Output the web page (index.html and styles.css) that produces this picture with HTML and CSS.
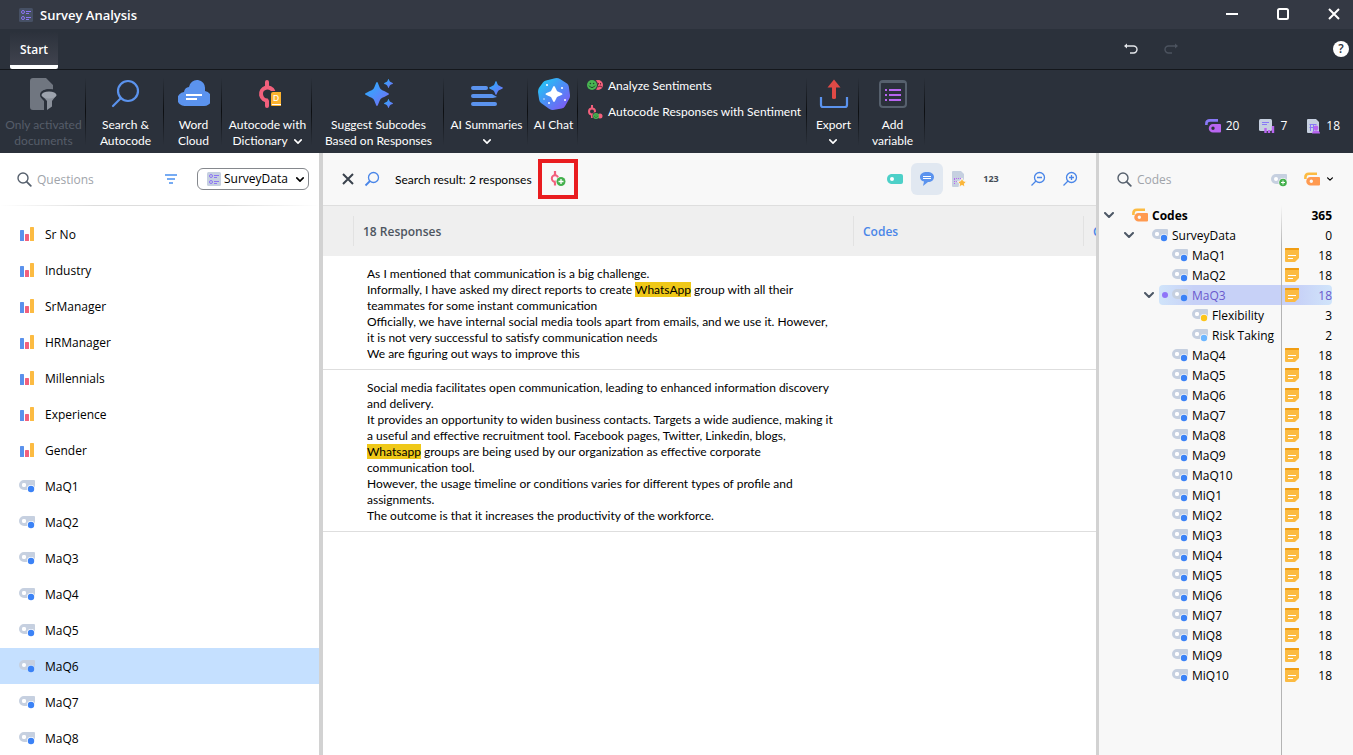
FILE: index.html
```html
<!DOCTYPE html>
<html lang="en">
<head>
<meta charset="utf-8">
<title>Survey Analysis</title>
<link rel="stylesheet" href="styles.css">
</head>
<body>
<svg class="sprite" aria-hidden="true">
  <defs>
    <linearGradient id="spark" x1="0" y1="0" x2="1" y2="1"><stop offset="0" stop-color="#22b4ff"/><stop offset="1" stop-color="#7a6af5"/></linearGradient>
    <linearGradient id="chat" x1="0" y1="0" x2="1" y2="1"><stop offset="0" stop-color="#19d3f5"/><stop offset=".5" stop-color="#4c8df6"/><stop offset="1" stop-color="#8a4df5"/></linearGradient>
    <mask id="tagmask"><path fill="#fff" d="M0 0h16v16H0z"/><circle cx="12" cy="11" r="4"/></mask>
    <symbol id="bars" viewBox="0 0 14 14"><rect x="0" y="3" width="4" height="11" rx=".6" fill="#5a91ec"/><rect x="5" y="7" width="4" height="7" rx=".6" fill="#f2607c"/><rect x="10" y="0" width="4" height="14" rx=".6" fill="#fcbb42"/></symbol>
    <symbol id="tag" viewBox="0 0 16 16"><path mask="url(#tagmask)" fill="#c6d0e0" fill-rule="evenodd" d="M5 2h10a1 1 0 0 1 1 1v8a1 1 0 0 1-1 1H5A5 5 0 0 1 5 2zm0 3a2 2 0 1 0 0 4 2 2 0 0 0 0-4z"/><circle cx="5" cy="7" r="2" fill="#fff"/><circle cx="12" cy="11" r="3.2" fill="currentColor"/></symbol>
    <symbol id="tags" viewBox="0 0 16 14"><path fill="none" stroke="#fcbb42" stroke-width="2.6" d="M1.400 7V5.200C1.400 3 3 1.700 5 1.700h8"/><path fill="#ff9a50" fill-rule="evenodd" d="M6.500 5H15a1 1 0 0 1 1 1v6.500a1 1 0 0 1-1 1H6.500a4.200 4.200 0 0 1 0-8.500zm.8 2.600a1.700 1.700 0 1 0 0 3.400 1.700 1.700 0 0 0 0-3.400z"/></symbol>
    <symbol id="memo" viewBox="0 0 14 14"><path fill="#fcbb42" d="M0 0h14v10l-4 4H1a1 1 0 0 1-1-1z"/><path fill="#f09d13" d="M0 1a1 1 0 0 1 1-1h12a1 1 0 0 1 1 1v1H0z"/><path stroke="#fff" d="M3 7.500h8M3 10.500h5"/></symbol>
    <symbol id="down" viewBox="0 0 10 6"><path fill="none" stroke="currentColor" stroke-width="2" stroke-linecap="round" stroke-linejoin="round" d="M1 1l4 4 4-4"/></symbol>
    <symbol id="find" viewBox="0 0 15 15"><circle cx="6" cy="6" r="5" fill="none" stroke="currentColor" stroke-width="1.400"/><path stroke="currentColor" stroke-width="1.800" stroke-linecap="round" d="M9.800 9.800l4 4"/></symbol>
    <symbol id="survey" viewBox="0 0 14 14"><rect width="14" height="14" rx="1.500" fill="var(--plate)"/><g fill="none" stroke="#8d75f5"><circle cx="4" cy="4" r="1.500"/><circle cx="4" cy="10" r="1.500"/><path d="M7 3.500h5M7 5.500h3M7 9.500h5M7 11.500h3"/></g></symbol>
    <symbol id="star4" viewBox="0 0 20 20"><path fill="url(#spark)" d="M10 0c1 0 1.600 4 3 5.800 1.800 1.600 7 3.200 7 4.200s-5.200 2.600-7 4.200C11.600 16 11 20 10 20s-1.600-4-3-5.800C5.200 12.600 0 11 0 10s5.200-2.600 7-4.200C8.400 4 9 0 10 0z"/></symbol>
    <symbol id="smile" viewBox="0 0 10 10"><circle cx="5" cy="5" r="5" fill="#49b552"/><circle cx="3.400" cy="3.500" r=".8" fill="#20462b"/><circle cx="6.600" cy="3.500" r=".8" fill="#20462b"/><path d="M2 5.600q3 4 6 0" fill="none" stroke="#20462b"/></symbol>
  </defs>
</svg>

<div class="app">
  <header class="titlebar">
    <svg class="i14 dark-plate"><use href="#survey"/></svg>
    <h1>Survey Analysis</h1>
    <div class="window-buttons">
      <button type="button" aria-label="Minimize"><svg width="14" height="14"><path d="M1 6h12" stroke="#fff" stroke-width="2"/></svg></button>
      <button type="button" aria-label="Maximize"><svg width="14" height="14"><rect x="2" y="1" width="10" height="10" rx="1.500" fill="none" stroke="#fff" stroke-width="2"/></svg></button>
      <button type="button" aria-label="Close"><svg width="14" height="14"><path d="M2 1l10 10M12 1L2 11" stroke="#fff" stroke-width="2"/></svg></button>
    </div>
  </header>

  <nav class="tabs">
    <button type="button" class="tab">Start</button>
    <div class="tab-actions">
      <button type="button" aria-label="Undo"><svg width="16" height="14" fill="none" stroke="#e4e6ea" stroke-width="1.400"><path d="M2 4h8.500a3.500 3.500 0 0 1 0 7H7"/><path d="M4 1.500L1 4l3 2.500z" fill="#e4e6ea" stroke="none"/></svg></button>
      <button type="button" aria-label="Redo" disabled><svg width="16" height="14" fill="none" stroke="#4c535f" stroke-width="1.400"><path d="M14 4H5.500a3.500 3.500 0 0 0 0 7H9"/><path d="M12 1.500L15 4l-3 2.500z" fill="#4c535f" stroke="none"/></svg></button>
      <button type="button" class="help" aria-label="Help">?</button>
    </div>
  </nav>

  <section class="ribbon" aria-label="Start">
    <div class="group g-docs"><button type="button" disabled>
      <svg width="32" height="32"><path fill="#707680" d="M5 0h13l7 7v4.500c-7-1-12 1-12 5 0 2 2 3 4 5V32H5a3 3 0 0 1-3-3V3a3 3 0 0 1 3-3z"/><path fill="#2b313b" d="M27 12c-8-2-15 0-15 5 0 2 1.500 3.500 4 6v9h3V22l-5-5z"/><path fill="#8a909a" d="M13.500 17l5.500 6v9l5-3.500V23l4.500-6z"/><ellipse cx="21" cy="17" rx="7.500" ry="3.500" fill="#9da3ad"/></svg>
      <span>Only activated<br>documents</span></button></div>
    <div class="group g-search"><button type="button">
      <svg width="32" height="32" fill="none" stroke="#5b93ee" stroke-width="2.200" stroke-linecap="round"><circle cx="18" cy="13" r="10"/><path d="M11 20l-8 8"/></svg>
      <span>Search &amp;<br>Autocode</span></button></div>
    <div class="group g-cloud"><button type="button">
      <svg width="32" height="32"><path fill="#5b93ee" d="M7 28a7 7 0 0 1-1-14 6 6 0 0 1 5-5 8 8 0 0 1 16 2v2a7.500 7.500 0 0 1-2 15z"/><path stroke="#fff" stroke-width="1.800" d="M8 17h16M8 21h11"/></svg>
      <span>Word<br>Cloud</span></button></div>
    <div class="group g-dict"><button type="button">
      <svg width="32" height="32"><path stroke="#f2607c" stroke-width="4" stroke-linecap="round" d="M15 4v5M15 23v5"/><path fill="none" stroke="#f2607c" stroke-width="4" d="M21.500 13.500A6.500 6.500 0 1 0 16 22.500"/><path fill="#2b313b" d="M18 13h12v16H18z"/><path fill="#fcb22f" d="M21 14h8v14h-9q-1 0-1-1V16q0-2 2-2z"/><path stroke="#fff" d="M20 26.500h9"/><text x="21" y="23" fill="#fff" font-size="8" font-weight="600">D</text></svg>
      <span>Autocode with<br>Dictionary <svg class="caret"><use href="#down"/></svg></span></button></div>
    <div class="group g-suggest"><button type="button">
      <svg width="32" height="32"><use href="#star4" x="2" y="4" width="24" height="24"/><use href="#star4" x="21" y="1" width="9" height="9"/><use href="#star4" x="21" y="21" width="9" height="9"/></svg>
      <span>Suggest Subcodes<br>Based on Responses</span></button></div>
    <div class="group g-sum"><button type="button">
      <svg width="32" height="32"><path stroke="#5b93ee" stroke-width="4" stroke-linecap="round" d="M2 10h13M2 18h17M2 26h22"/><path fill="#5b93ee" d="M16 16h5l5 3-4 1h-6z"/><use href="#star4" x="18" y="3" width="14" height="14"/></svg>
      <span>AI Summaries<br><svg class="caret"><use href="#down"/></svg></span></button></div>
    <div class="group g-chat"><button type="button">
      <svg width="32" height="32"><path fill="url(#chat)" d="M8 2.500L17 .2q3-.5 5 .7l7 4.600q1.500 1.200 1.800 3L32 17q.2 2-.9 4l-4 7q-1 2-3.400 2.500L15 32q-2 .2-4-1.200L3 25q-1.600-1.400-1.900-3.500L0 14q0-2 .9-4l4-5.500q1-1.500 3.100-2z"/><path fill="#fff" d="M16 8c1 0 2 3.500 3 5 1.500 1 5.500 2 5.500 3s-4 2-5.500 3c-1 1.500-2 5-3 5s-2-3.500-3-5c-1.500-1-5.500-2-5.500-3s4-2 5.500-3c1-1.500 2-5 3-5z"/><g fill="#fff"><circle cx="9" cy="7" r="1"/><circle cx="24" cy="10" r="1"/><circle cx="27" cy="22" r="1"/><circle cx="11" cy="25" r="1"/><circle cx="6" cy="21" r=".7"/></g></svg>
      <span>AI Chat</span></button></div>
    <div class="group g-senti">
      <button type="button" class="line"><svg width="16" height="16"><circle cx="11" cy="7" r="5" fill="#f2607c"/><path d="M11 9q2-2 4 0M11.500 5v1.500M13.500 5v1.500" fill="none" stroke="#6a2637"/><circle cx="5.500" cy="7" r="5.500" fill="#2b313b"/><use href="#smile" x="0" y="2" width="10" height="10"/></svg><span>Analyze Sentiments</span></button>
      <button type="button" class="line"><svg width="16" height="16"><path fill="none" stroke="#f2607c" stroke-width="2" d="M5 1v3M5 11v3"/><circle cx="5" cy="7.500" r="3" fill="none" stroke="#f2607c" stroke-width="2"/><circle cx="9.500" cy="12" r="4" fill="#2b313b"/><circle cx="13" cy="12" r="2.500" fill="#f2607c"/><use href="#smile" x="6" y="9" width="6" height="6"/></svg><span>Autocode Responses with Sentiment</span></button>
    </div>
    <div class="group g-export"><button type="button">
      <svg width="32" height="32"><path fill="none" stroke="#5b93ee" stroke-width="2.200" d="M3 19v8q0 2 2 2h22q2 0 2-2v-8"/><path fill="#e04a46" d="M16 1.500l6.500 8H18V20q0 1-2 1t-2-1V9.500H9.500z"/></svg>
      <span>Export<br><svg class="caret"><use href="#down"/></svg></span></button></div>
    <div class="group g-var"><button type="button">
      <svg width="32" height="32"><rect x="3" y="3" width="26" height="26" rx="3" fill="none" stroke="#56606d" stroke-width="2"/><path stroke="#56606d" stroke-width="2" d="M3 4h26"/><path stroke="#b865f0" stroke-width="2" d="M8 12h2M8 17h2M8 22h2M12 12h12M12 17h12M12 22h12"/></svg>
      <span>Add<br>variable</span></button></div>
    <div class="stats">
      <span><svg width="16" height="16"><path fill="none" stroke="#8878f6" stroke-width="2.600" d="M1.400 7V5.600c0-2 1.600-3.200 3.600-3.200h8"/><path fill="#b865f0" fill-rule="evenodd" d="M8 6h7q1 0 1 1v6.500q0 1-1 1H8A4.200 4.200 0 0 1 8 6zm0 2.600a1.700 1.700 0 1 0 0 3.400 1.700 1.700 0 0 0 0-3.400z"/></svg>20</span>
      <span><svg width="16" height="16"><rect x="0" y="1" width="13" height="12" rx="1.500" fill="#c6d0e0"/><path stroke="#8878f6" d="M3 4.500h7M3 6.500h5"/><path stroke="#b865f0" stroke-width="2.400" d="M6.500 10v5M10 12v3M14 8v7"/></svg>7</span>
      <span><svg width="14" height="16"><path fill="#c6d0e0" d="M1 1h8l3 3v11H1q-1 0-1-1V2q0-1 1-1z"/><path fill="none" stroke="#8878f6" d="M2.500 6.500h7M2.500 9.500h5M3.500 6v7M6.500 6v7"/><circle cx="9" cy="10" r="2.400" fill="#b865f0"/><path fill="#b865f0" d="M5 15.500q0-3 4-3t4 3z"/></svg>18</span>
    </div>
  </section>

  <main class="panes">
    <aside class="questions">
      <div class="pane-head">
        <label class="search"><svg class="i15"><use href="#find"/></svg><input type="text" placeholder="Questions" aria-label="Questions"></label>
        <button type="button" aria-label="Filter"><svg width="14" height="10" stroke="#4a90f0" stroke-width="1.400"><path d="M1 1h12M3 5h8M5 9h4"/></svg></button>
        <div class="picker">
          <svg class="i14 picker-icon"><use href="#survey"/></svg>
          <select aria-label="Survey"><option>SurveyData</option></select>
          <svg class="picker-caret"><use href="#down"/></svg>
        </div>
      </div>
      <ul class="question-list">
        <li><svg class="i14"><use href="#bars"/></svg><span>Sr No</span></li>
        <li><svg class="i14"><use href="#bars"/></svg><span>Industry</span></li>
        <li><svg class="i14"><use href="#bars"/></svg><span>SrManager</span></li>
        <li><svg class="i14"><use href="#bars"/></svg><span>HRManager</span></li>
        <li><svg class="i14"><use href="#bars"/></svg><span>Millennials</span></li>
        <li><svg class="i14"><use href="#bars"/></svg><span>Experience</span></li>
        <li><svg class="i14"><use href="#bars"/></svg><span>Gender</span></li>
        <li><svg class="i16 blue"><use href="#tag"/></svg><span>MaQ1</span></li>
        <li><svg class="i16 blue"><use href="#tag"/></svg><span>MaQ2</span></li>
        <li><svg class="i16 blue"><use href="#tag"/></svg><span>MaQ3</span></li>
        <li><svg class="i16 blue"><use href="#tag"/></svg><span>MaQ4</span></li>
        <li><svg class="i16 blue"><use href="#tag"/></svg><span>MaQ5</span></li>
        <li class="selected"><svg class="i16 blue"><use href="#tag"/></svg><span>MaQ6</span></li>
        <li><svg class="i16 blue"><use href="#tag"/></svg><span>MaQ7</span></li>
        <li><svg class="i16 blue"><use href="#tag"/></svg><span>MaQ8</span></li>
      </ul>
    </aside>

    <section class="responses">
      <div class="toolbar">
        <button type="button" class="clear" aria-label="Close search"><svg width="14" height="14"><path d="M2 2l10 10M12 2L2 12" stroke="#3a424d" stroke-width="2"/></svg></button>
        <svg class="result-icon" width="16" height="16" fill="none" stroke="#4a86e8" stroke-width="1.300"><circle cx="9.500" cy="6.500" r="5"/><path d="M6 10l-4.500 4.500" stroke-width="1.800"/></svg>
        <span class="result">Search result: 2 responses</span>
        <button type="button" class="autocode" aria-label="Autocode search results"><svg width="16" height="16"><path fill="none" stroke="#f2607c" stroke-width="2.200" d="M5 0v4M5 11v3.500"/><circle cx="5" cy="7.500" r="3.200" fill="none" stroke="#f2607c" stroke-width="2"/><circle cx="11" cy="10.500" r="5.300" fill="#f8f8f8"/><circle cx="11" cy="10.500" r="4.500" fill="#43b04c"/><path stroke="#fff" stroke-width="1.300" d="M8.500 10.500h5M11 8v5"/></svg></button>
        <div class="tools">
          <button type="button" aria-label="Codes"><svg width="16" height="16"><path fill="#4dd0c8" d="M4 3h10q2 0 2 2v6q0 2-2 2H4q-4-1-4-5t4-5z"/><circle cx="5" cy="8" r="2" fill="#fff"/></svg></button>
          <button type="button" class="on" aria-label="Comments"><svg width="16" height="16"><path fill="#5b93ee" d="M8 1c4.500 0 7 2 7 5s-2.500 5-6 5l-5 4 1-4.500C2.500 10 1 8.500 1 6c0-3 2.500-5 7-5z"/><path stroke="#fff" d="M4 5.500h8M4 7.500h8"/></svg></button>
          <button type="button" aria-label="Weighted documents"><svg width="16" height="16"><path fill="#c6d0e0" d="M2 0h8l3 3v6l-4 7H2q-1 0-1-1V1q0-1 1-1z"/><path stroke="#b865f0" stroke-dasharray="1 1" d="M3 7.500h7M3 10.500h4M3.500 8v6"/><path fill="#fbb63b" stroke="#f8f8f8" d="M11 7l1.500 3 3.200.5-2.300 2.300.6 3.200-3-1.500-3 1.500.6-3.200-2.300-2.300 3.200-.5z"/></svg></button>
          <button type="button" class="num">123</button>
          <button type="button" class="spaced" aria-label="Zoom out"><svg width="16" height="16" fill="none" stroke="#4a86e8" stroke-width="1.300"><circle cx="9.500" cy="6.500" r="5"/><path d="M7 6.500h5M6 10l-4.500 4.500"/></svg></button>
          <button type="button" aria-label="Zoom in"><svg width="16" height="16" fill="none" stroke="#4a86e8" stroke-width="1.300"><circle cx="9.500" cy="6.500" r="5"/><path d="M7 6.500h5M9.500 4v5M6 10l-4.500 4.500"/></svg></button>
        </div>
      </div>
      <div class="table-wrap">
        <table>
          <colgroup><col class="c-mark"><col class="c-text"><col class="c-codes"><col class="c-more"></colgroup>
          <thead><tr><th></th><th>18 Responses</th><th class="link">Codes</th><th class="link">Comments</th></tr></thead>
          <tbody>
            <tr><td></td><td><p>As I mentioned that communication is a big challenge.</p><p>Informally, I have asked my direct reports to create <mark>WhatsApp</mark> group with all their teammates for some instant communication</p><p>Officially, we have internal social media tools apart from emails, and we use it. However, it is not very successful to satisfy communication needs</p><p>We are figuring out ways to improve this</p></td><td></td><td></td></tr>
            <tr><td></td><td><p>Social media facilitates open communication, leading to enhanced information discovery and delivery.</p><p>It provides an opportunity to widen business contacts. Targets a wide audience, making it a useful and effective recruitment tool. Facebook pages, Twitter, Linkedin, blogs, <mark>Whatsapp</mark> groups are being used by our organization as effective corporate communication tool.</p><p>However, the usage timeline or conditions varies for different types of profile and assignments.</p><p>The outcome is that it increases the productivity of the workforce.</p></td><td></td><td></td></tr>
          </tbody>
        </table>
      </div>
    </section>

    <aside class="codes">
      <div class="codes-head">
        <label class="search"><svg class="i15"><use href="#find"/></svg><input type="text" placeholder="Codes" aria-label="Codes"></label>
        <button type="button" aria-label="New code"><svg width="16" height="16"><path fill="#c6d0e0" d="M5 3h10q1 0 1 1v8q0 1-1 1H5A5 5 0 0 1 5 3z"/><circle cx="5" cy="8" r="2" fill="#fff"/><circle cx="12" cy="11.500" r="4.500" fill="#f8f8f8"/><circle cx="12" cy="11.500" r="3.800" fill="#43b04c"/><path stroke="#fff" d="M10 11.500h4M12 9.500v4"/></svg></button>
        <button type="button" class="code-menu" aria-label="Code options"><svg width="16" height="14"><use href="#tags"/></svg><svg class="mini-caret"><use href="#down"/></svg></button>
      </div>
      <ul class="tree">
        <li class="d0 root"><button type="button" class="toggle" aria-label="Collapse Codes"><svg class="caret"><use href="#down"/></svg></button><div class="node"><i></i><svg width="16" height="14"><use href="#tags"/></svg><span>Codes</span><b>365</b></div></li>
        <li class="d1"><button type="button" class="toggle" aria-label="Collapse SurveyData"><svg class="caret"><use href="#down"/></svg></button><div class="node"><i></i><svg class="i16 blue"><use href="#tag"/></svg><span>SurveyData</span><b>0</b></div></li>
        <li class="d2"><div class="node"><i></i><svg class="i16 blue"><use href="#tag"/></svg><span>MaQ1</span><svg class="i14"><use href="#memo"/></svg><b>18</b></div></li>
        <li class="d2"><div class="node"><i></i><svg class="i16 blue"><use href="#tag"/></svg><span>MaQ2</span><svg class="i14"><use href="#memo"/></svg><b>18</b></div></li>
        <li class="d2 current"><button type="button" class="toggle" aria-label="Collapse MaQ3"><svg class="caret"><use href="#down"/></svg></button><div class="node"><i></i><svg class="i16 blue"><use href="#tag"/></svg><span>MaQ3</span><svg class="i14"><use href="#memo"/></svg><b>18</b></div></li>
        <li class="d3"><div class="node"><i></i><svg class="i16 yellow"><use href="#tag"/></svg><span>Flexibility</span><b>3</b></div></li>
        <li class="d3"><div class="node"><i></i><svg class="i16 sky"><use href="#tag"/></svg><span>Risk Taking</span><b>2</b></div></li>
        <li class="d2"><div class="node"><i></i><svg class="i16 blue"><use href="#tag"/></svg><span>MaQ4</span><svg class="i14"><use href="#memo"/></svg><b>18</b></div></li>
        <li class="d2"><div class="node"><i></i><svg class="i16 blue"><use href="#tag"/></svg><span>MaQ5</span><svg class="i14"><use href="#memo"/></svg><b>18</b></div></li>
        <li class="d2"><div class="node"><i></i><svg class="i16 blue"><use href="#tag"/></svg><span>MaQ6</span><svg class="i14"><use href="#memo"/></svg><b>18</b></div></li>
        <li class="d2"><div class="node"><i></i><svg class="i16 blue"><use href="#tag"/></svg><span>MaQ7</span><svg class="i14"><use href="#memo"/></svg><b>18</b></div></li>
        <li class="d2"><div class="node"><i></i><svg class="i16 blue"><use href="#tag"/></svg><span>MaQ8</span><svg class="i14"><use href="#memo"/></svg><b>18</b></div></li>
        <li class="d2"><div class="node"><i></i><svg class="i16 blue"><use href="#tag"/></svg><span>MaQ9</span><svg class="i14"><use href="#memo"/></svg><b>18</b></div></li>
        <li class="d2"><div class="node"><i></i><svg class="i16 blue"><use href="#tag"/></svg><span>MaQ10</span><svg class="i14"><use href="#memo"/></svg><b>18</b></div></li>
        <li class="d2"><div class="node"><i></i><svg class="i16 blue"><use href="#tag"/></svg><span>MiQ1</span><svg class="i14"><use href="#memo"/></svg><b>18</b></div></li>
        <li class="d2"><div class="node"><i></i><svg class="i16 blue"><use href="#tag"/></svg><span>MiQ2</span><svg class="i14"><use href="#memo"/></svg><b>18</b></div></li>
        <li class="d2"><div class="node"><i></i><svg class="i16 blue"><use href="#tag"/></svg><span>MiQ3</span><svg class="i14"><use href="#memo"/></svg><b>18</b></div></li>
        <li class="d2"><div class="node"><i></i><svg class="i16 blue"><use href="#tag"/></svg><span>MiQ4</span><svg class="i14"><use href="#memo"/></svg><b>18</b></div></li>
        <li class="d2"><div class="node"><i></i><svg class="i16 blue"><use href="#tag"/></svg><span>MiQ5</span><svg class="i14"><use href="#memo"/></svg><b>18</b></div></li>
        <li class="d2"><div class="node"><i></i><svg class="i16 blue"><use href="#tag"/></svg><span>MiQ6</span><svg class="i14"><use href="#memo"/></svg><b>18</b></div></li>
        <li class="d2"><div class="node"><i></i><svg class="i16 blue"><use href="#tag"/></svg><span>MiQ7</span><svg class="i14"><use href="#memo"/></svg><b>18</b></div></li>
        <li class="d2"><div class="node"><i></i><svg class="i16 blue"><use href="#tag"/></svg><span>MiQ8</span><svg class="i14"><use href="#memo"/></svg><b>18</b></div></li>
        <li class="d2"><div class="node"><i></i><svg class="i16 blue"><use href="#tag"/></svg><span>MiQ9</span><svg class="i14"><use href="#memo"/></svg><b>18</b></div></li>
        <li class="d2"><div class="node"><i></i><svg class="i16 blue"><use href="#tag"/></svg><span>MiQ10</span><svg class="i14"><use href="#memo"/></svg><b>18</b></div></li>
      </ul>
    </aside>
  </main>
</div>
</body>
</html>
```
FILE: styles.css
```css
* { box-sizing: border-box; }
body {
  margin: 0;
  font: 12px/16px "Open Sans", "Noto Sans", sans-serif;
  color: #000;
  background: #fff;
}
button, input, select { font: inherit; color: inherit; }
button { padding: 0; border: 0; background: none; }
svg { display: block; flex: none; }
ul { margin: 0; padding: 0; list-style: none; }
.sprite { position: absolute; width: 0; height: 0; }
.i14 { width: 14px; height: 14px; --plate: #c6d0e0; }
.i15 { width: 15px; height: 15px; }
.i16 { width: 16px; height: 16px; }
.dark-plate { --plate: #465064; }
.blue { color: #3b82f6; }
.yellow { color: #fcc419; }
.sky { color: #6cb6ff; }

.app { display: flex; flex-direction: column; height: 100vh; overflow: hidden; }

.titlebar {
  display: flex;
  align-items: center;
  flex: none;
  height: 29px;
  padding: 0 12px 0 19px;
  gap: 7px;
  color: #fff;
  background: #343944;
}
.titlebar h1 { margin: 0; font-size: 13px; font-weight: 600; }
.window-buttons { display: flex; gap: 37px; margin-left: auto; }

.tabs {
  display: flex;
  align-items: flex-end;
  flex: none;
  height: 41px;
  padding: 0 4px 0 10px;
  color: #fff;
  background: #2b313b;
  border-bottom: 1px solid #14171c;
}
.tab {
  width: 48px;
  height: 38px;
  padding-top: 4px;
  font-weight: 600;
  border-bottom: 4px solid #fff;
  border-radius: 2px;
  background: linear-gradient(#2b313b, #40434e);
}
.tab-actions { display: flex; align-items: center; gap: 24px; height: 40px; margin-left: auto; }
.help {
  width: 16px;
  height: 16px;
  margin-left: 130px;
  border-radius: 50%;
  font-weight: 600;
  color: #2b313b;
  background: #fff;
}

.ribbon { display: flex; flex: none; height: 83px; color: #fff; background: #2b313b; }
.group, .result, td { font-family: Lato, "Open Sans", sans-serif; }
.group {
  flex: none;
  padding: 8px 0 0 2px;
  border-right: 1px solid;
  border-image: linear-gradient(#2b313b 10%, #0c0e11 50%, #2b313b 90%) 1;
}
.group > button {
  display: flex;
  flex-direction: column;
  align-items: center;
  gap: 7px;
  width: 100%;
  text-align: center;
  white-space: nowrap;
}
.group button:disabled { color: #565d69; }
.g-docs { width: 86px; }
.g-search { width: 78px; }
.g-cloud { width: 58px; }
.g-dict { width: 90px; }
.g-suggest { width: 132px; }
.g-sum { width: 84px; }
.g-chat { width: 50px; }
.g-senti { display: flex; flex-direction: column; gap: 10px; width: 229px; padding-left: 9px; }
.g-export { width: 52px; }
.g-var { width: 66px; }
.group > .line { flex-direction: row; gap: 5px; height: 16px; }
.caret { display: inline-block; width: 10px; height: 6px; vertical-align: middle; }
.group .caret { width: 8px; height: 5px; margin-left: 4px; }
.g-sum .caret, .g-export .caret { margin-left: 0; }
.stats { display: flex; align-items: flex-start; gap: 20px; margin-left: auto; padding: 48px 13px 0 0; }
.stats span { display: flex; align-items: center; gap: 5px; }

.panes {
  display: grid;
  grid-template-columns: 323px minmax(0, 1fr) 257px;
  flex: 1;
  min-height: 0;
}
.questions { border-right: 4px solid #d2d2d2; overflow: hidden; }
.pane-head, .codes-head { display: flex; align-items: center; height: 53px; }
.pane-head { gap: 19px; padding: 0 10px 0 17px; border-bottom: 1px solid; border-image: linear-gradient(90deg, #fff, #ddd 30%, #ddd 70%, #fff) 1; }
.search { display: flex; align-items: center; flex: 1; gap: 5px; min-width: 0; color: #56606d; }
.search input { flex: 1; width: 0; min-width: 0; padding: 2px 0 0; border: 0; outline: 0; background: none; }
.search input::placeholder { color: #a0a4aa; opacity: 1; }
.picker { position: relative; width: 112px; }
.picker select {
  display: block;
  width: 100%;
  height: 22px;
  padding: 0 0 0 26px;
  border: 1px solid #85888d;
  border-radius: 6px;
  appearance: none;
  background: #fff;
}
.picker-icon { position: absolute; left: 10px; top: 4px; }
.picker-caret { position: absolute; right: 5px; top: 9px; width: 8px; height: 5px; }
.question-list { padding-top: 10px; }
.question-list li { display: flex; align-items: center; height: 36px; padding-left: 19px; gap: 10px; }
.question-list .i14 { margin: 0 1px; }
.question-list span, .node span, .node b, .result { padding-top: 2px; }
.question-list .selected { background: #c5e0ff; }

.responses { display: flex; flex-direction: column; min-width: 0; background: #fff; }
.toolbar {
  display: flex;
  align-items: center;
  flex: none;
  height: 53px;
  padding: 0 10px 0 18px;
  background: #f8f8f8;
  border-bottom: 1px solid #dedede;
}
.result-icon { margin: 0 15px 0 9px; }
.result { min-width: 134px; }
.autocode {
  display: grid;
  place-items: center;
  width: 40px;
  height: 40px;
  margin-left: 6px;
  border: 4px solid #e91c1f;
}
.tools { display: flex; margin-left: auto; }
.tools button { display: grid; place-items: center; width: 32px; height: 32px; border-radius: 6px; }
.tools .on { background: #e1e8f1; }
.tools .spaced { margin-left: 15px; }
.tools .num { font-size: 9px; font-weight: 700; color: #464d57; }
.table-wrap { overflow: hidden; }
table { width: 100%; table-layout: fixed; border-collapse: collapse; }
.c-mark { width: 30px; }
.c-codes { width: 230px; }
.c-more { width: 13px; }
th {
  height: 50px;
  padding: 2px 10px 0;
  overflow: hidden;
  text-align: left;
  white-space: nowrap;
  font-weight: 600;
  color: #4d5560;
  background: linear-gradient(#e2e2e2, #e2e2e2) no-repeat left center / 1px 30px #efefef;
}
th:first-child { background: #efefef; }
th.link { color: #4a86e8; }
td { padding: 10px 18px 7px 14px; vertical-align: top; border-bottom: 1px solid #dedede; }
td:first-child, td:last-child { padding: 0; }
p { margin: 0; }
mark { color: inherit; background: #efc818; }

.codes { display: flex; flex-direction: column; background: #f8f8f8; border-left: 3px solid #d2d2d2; overflow: hidden; }
.codes-head { flex: none; height: 52px; gap: 17px; padding: 0 20px 0 18px; }
.code-menu { display: flex; align-items: center; gap: 7px; }
.mini-caret { width: 6px; height: 4px; }
.tree { position: relative; flex: 1; }
.tree::after {
  content: "";
  position: absolute;
  top: 0;
  bottom: 0;
  right: 71px;
  width: 1px;
  background: linear-gradient(#f8f8f8, #b4b4b4 40px);
}
.tree li { display: flex; align-items: center; justify-content: flex-end; height: 20px; padding-right: 21px; }
.toggle { display: grid; place-items: center; flex: none; width: 20px; height: 20px; color: #4d5866; }
.node { display: flex; align-items: center; height: 20px; border-radius: 4px; }
.node i { flex: none; width: 13px; }
.node span { flex: 1; padding-left: 4px; }
.node b { width: 33px; font-weight: 400; text-align: right; }
.d0 .node { width: 213px; }
.d1 .node { width: 193px; }
.d2 .node { width: 173px; }
.d3 .node { width: 153px; }
.root .node span, .root .node b { font-weight: 700; }
.current .node { color: #6a5acd; background: linear-gradient(90deg, #d0e4fa, #c7d1f7 20%, #c7d1f7 80%, #d0e4fa); }
.current i::before { content: ""; display: block; width: 6px; height: 6px; margin-left: 3px; border-radius: 50%; background: #8f75f8; }
```
